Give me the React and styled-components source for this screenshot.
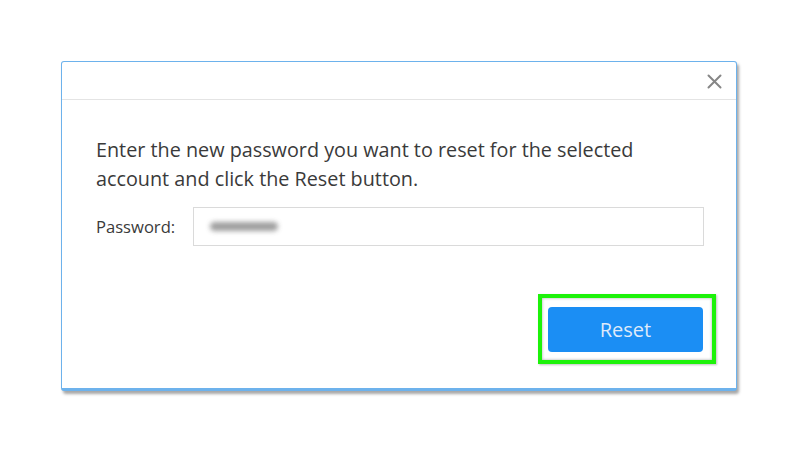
import React from 'react';
import styled, { createGlobalStyle } from 'styled-components';

const GlobalStyle = createGlobalStyle`
    html, body {
        margin:0;
        padding:0;
        background:#ffffff;
    }
    body {
        font-family:"Open Sans", "Noto Sans", "Liberation Sans", sans-serif;
        color:#333333;
    }
`

const Page = styled.div`
    width:800px;
    height:451px;
    padding:61px 0 0 61px;
    box-sizing:border-box;
`

const Dialog = styled.div`
    width:676px;
    height:330px;
    box-sizing:border-box;
    background:#ffffff;
    border:1.5px solid #6db2ec;
    border-bottom-width:3px;
    border-radius:3px;
    box-shadow:2px 3px 3px rgba(0,0,0,0.35);
    display:flex;
    flex-direction:column;
`

const Header = styled.div`
    height:37px;
    flex-shrink:0;
    border-bottom:1.5px solid #e4e4e4;
    display:flex;
    justify-content:flex-end;
    align-items:center;
    padding-right:14px;
`

const CloseButton = styled.button`
    border:none;
    background:none;
    padding:0;
    width:16px;
    height:16px;
    display:flex;
    align-items:center;
    justify-content:center;
    cursor:pointer;
    margin-top:2px;
`

const Body = styled.div`
    flex:1;
    display:flex;
    flex-direction:column;
    padding:35px 20px 0 34px;
`

const Message = styled.p`
    margin:0;
    font-size:19.8px;
    line-height:29px;
    color:#3a3a3a;
`

const FieldRow = styled.div`
    display:flex;
    align-items:center;
    margin-top:14px;
    margin-right:12px;
`

const Label = styled.label`
    font-size:16.6px;
    color:#3a3a3a;
    width:97px;
`

const InputBox = styled.div`
    flex:1;
    height:39px;
    box-sizing:border-box;
    border:1px solid #dadada;
    display:flex;
    align-items:center;
    padding-left:16px;
`

const MaskBlur = styled.div`
    width:68px;
    height:9px;
    border-radius:5px;
    background:#8e8e8e;
    filter:blur(2.5px);
    opacity:0.85;
`

const Footer = styled.div`
    display:flex;
    justify-content:flex-end;
    margin-top:48px;
`

const Highlight = styled.div`
    border:4px solid #1df20a;
    padding:9px 9px 8px 6px;
    box-shadow:inset 0 0 3px rgba(0,0,0,0.35), 1px 1px 2px rgba(0,0,0,0.25);
    display:flex;
`

const PrimaryButton = styled.button`
    width:155px;
    height:45px;
    border:none;
    border-radius:4px;
    background:#1b8ef4;
    color:#dfeafa;
    font-family:"Open Sans", "Noto Sans", sans-serif;
    font-size:20px;
    cursor:pointer;
`

function CloseIcon() {
    return (
        <svg width="15" height="15" viewBox="0 0 15 15">
            <path d="M1.5 1.5 L13.5 13.5 M13.5 1.5 L1.5 13.5" stroke="#868686" strokeWidth="2" strokeLinecap="round" />
        </svg>
    );
}

export default function App() {
    return (
        <Page>
            <GlobalStyle />
            <Dialog>
                <Header>
                    <CloseButton aria-label="Close"><CloseIcon /></CloseButton>
                </Header>
                <Body>
                    <Message>
                        Enter the new password you want to reset for the selected<br />
                        account and click the Reset button.
                    </Message>
                    <FieldRow>
                        <Label>Password:</Label>
                        <InputBox><MaskBlur /></InputBox>
                    </FieldRow>
                    <Footer>
                        <Highlight>
                            <PrimaryButton>Reset</PrimaryButton>
                        </Highlight>
                    </Footer>
                </Body>
            </Dialog>
        </Page>
    );
}
